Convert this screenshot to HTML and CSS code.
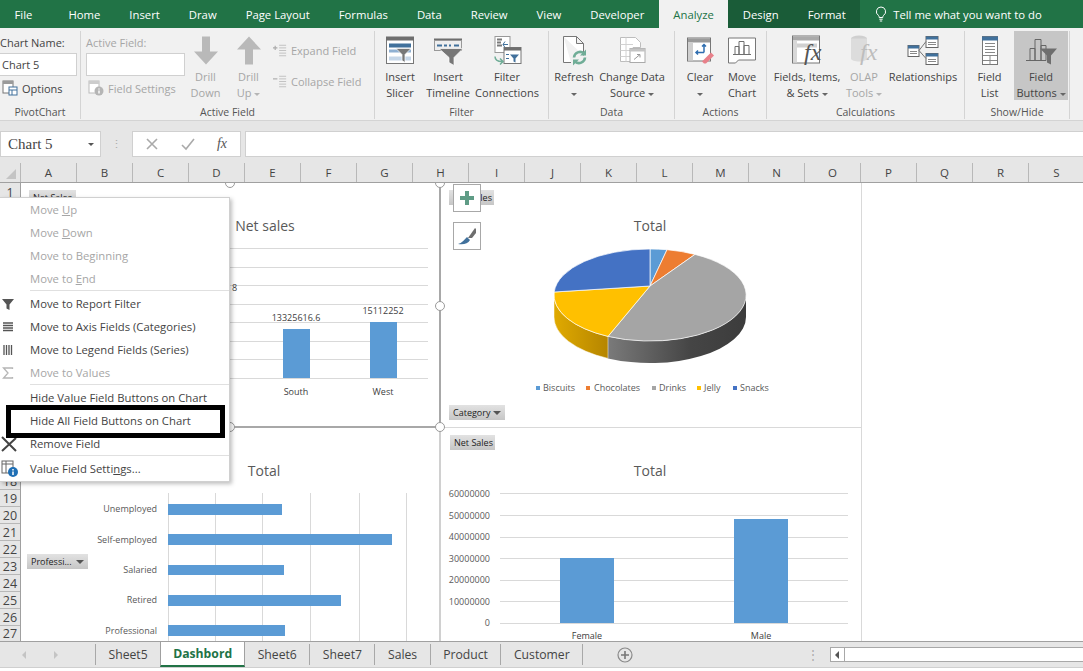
FILE: index.html
```html
<!DOCTYPE html>
<html lang="en">
<head>
    <meta charset="UTF-8">
    <title>Dashbord - Excel</title>
    <link rel="stylesheet" href="styles.css">
</head>
<body>
    <!-- Title tabs -->
    <nav class="tabs">
        <a class="tab tab-file">File</a>
        <a class="tab">Home</a>
        <a class="tab">Insert</a>
        <a class="tab">Draw</a>
        <a class="tab">Page Layout</a>
        <a class="tab">Formulas</a>
        <a class="tab">Data</a>
        <a class="tab">Review</a>
        <a class="tab">View</a>
        <a class="tab">Developer</a>
        <a class="tab tab-active">Analyze</a>
        <a class="tab tab-context">Design</a>
        <a class="tab tab-context">Format</a>
        <a class="tell">
            <svg width="12" height="17" viewBox="0 0 12 17"><path d="M6 1a4.6 4.6 0 0 0-2.6 8.4c.6.5.8 1.2.8 2.1h3.6c0-.9.2-1.6.8-2.1A4.6 4.6 0 0 0 6 1zM4.3 13.2h3.4M4.8 15h2.4" fill="none" stroke="#fff"/></svg>
            <span>Tell me what you want to do</span>
        </a>
    </nav>

    <!-- Ribbon -->
    <div class="ribbon">
        <section class="group g-pivot">
            <div class="group-body col">
                <div class="small-label">Chart Name:</div>
                <div class="name-input">Chart 5</div>
                <div class="small-btn">
                    <svg width="16" height="16" viewBox="0 0 16 16"><rect x="1" y="1" width="10" height="12" fill="#fff" stroke="#777"/><rect x="1" y="1" width="10" height="3" fill="#9a9a9a"/><rect x="7" y="7" width="8" height="8" fill="#fff" stroke="#41719c"/><path d="M7 10h8M10 10v5" stroke="#41719c"/></svg>
                    <span>Options</span>
                </div>
            </div>
            <div class="group-name">PivotChart</div>
        </section>

        <section class="group g-field">
            <div class="group-body">
                <div class="col col-field">
                    <div class="small-label off">Active Field:</div>
                    <div class="name-input wide"></div>
                    <div class="small-btn off">
                        <svg width="16" height="16" viewBox="0 0 16 16"><rect x="1" y="1" width="10" height="12" fill="#fff" stroke="#bbb"/><rect x="1" y="1" width="10" height="3" fill="#ccc"/><circle cx="11" cy="11" r="4.5" fill="#b5b5b5"/><path d="M11 8.5v1M11 10.5v3" stroke="#fff" stroke-width="1.4"/></svg>
                        <span>Field Settings</span>
                    </div>
                </div>
                <div class="big-btn off w-drill">
                    <svg class="big-icon" width="30" height="32" viewBox="0 0 30 32"><path d="M11 2h8v15h8L15 30 3 17h8z" fill="#b9b9b9"/></svg>
                    <span>Drill</span><span>Down</span>
                </div>
                <div class="big-btn off w-drill">
                    <svg class="big-icon" width="30" height="32" viewBox="0 0 30 32"><path d="M11 30h8V15h8L15 2 3 15h8z" fill="#b9b9b9"/></svg>
                    <span>Drill</span><span>Up <i class="caret"></i></span>
                </div>
                <div class="col col-expand">
                    <div class="small-btn off tall">
                        <svg width="14" height="13" viewBox="0 0 16 14"><path d="M0 4h5M2.500 1.500v5" stroke="#aaa" stroke-width="1.300"/><path d="M7 1h8M7 4h8M7 7h8M7 10h8M7 13h8" stroke="#bbb"/></svg>
                        <span>Expand Field</span>
                    </div>
                    <div class="small-btn off tall">
                        <svg width="14" height="13" viewBox="0 0 16 14"><path d="M0 4h5" stroke="#aaa" stroke-width="1.300"/><path d="M7 1h8M7 4h8M7 7h8M7 10h8M7 13h8" stroke="#bbb"/></svg>
                        <span>Collapse Field</span>
                    </div>
                </div>
            </div>
            <div class="group-name">Active Field</div>
        </section>

        <section class="group g-filter">
            <div class="group-body">
                <div class="big-btn w-slicer">
                    <svg class="big-icon" width="30" height="30" viewBox="0 0 30 30"><rect x="1.500" y="2" width="27" height="26" fill="#fff" stroke="#777"/><rect x="1" y="1" width="28" height="4" fill="#6e6e6e"/><rect x="4" y="8" width="22" height="4" fill="#41719c"/><rect x="4" y="14" width="22" height="3" fill="#8fb0d2"/><rect x="4" y="21" width="22" height="4" fill="#c5d6e8"/><path d="M11 13h15l-6 6v8l-3-2v-6z" fill="#777" stroke="#fff" stroke-width=".7"/></svg>
                    <span>Insert</span><span>Slicer</span>
                </div>
                <div class="big-btn w-timeline">
                    <svg class="big-icon" width="30" height="30" viewBox="0 0 30 30"><rect x="1" y="3" width="28" height="3" fill="#6e6e6e"/><rect x="1.500" y="5" width="27" height="10" fill="#eee" stroke="#999"/><path d="M4 10h5M11 10h3M16 10h2M21 10h5" stroke="#41719c" stroke-width="2"/><path d="M6 13h24l-9 9v8l-5-3v-5z" fill="#777" stroke="#fff" stroke-width=".7"/></svg>
                    <span>Insert</span><span>Timeline</span>
                </div>
                <div class="big-btn w-conn">
                    <svg class="big-icon" width="30" height="30" viewBox="0 0 30 30"><rect x="3" y="1" width="15" height="16" fill="#fff" stroke="#999"/><path d="M5 4h5M5 7h4M5 10h5" stroke="#7a7a7a" stroke-width="2"/><path d="M11 9h5M13 6l-2 3 2 3" fill="none" stroke="#41719c"/><rect x="12" y="12" width="17" height="16" fill="#fff" stroke="#777"/><rect x="12" y="12" width="17" height="3" fill="#6e6e6e"/><path d="M18 19h9l-3.500 4v4l-2-1v-3z" fill="#41719c"/><path d="M14 19h3M14 23h3" stroke="#41719c"/><path d="M3 21c0 4 3 5 7 5M8 23l3 3-3 3" fill="none" stroke="#70ad97" stroke-width="1.500"/></svg>
                    <span>Filter</span><span>Connections</span>
                </div>
            </div>
            <div class="group-name">Filter</div>
        </section>

        <section class="group g-data">
            <div class="group-body">
                <div class="big-btn w-refresh">
                    <svg class="big-icon" width="28" height="30" viewBox="0 0 28 30"><path d="M3.500 1h13l7 7v12M11 27H3.500V1M16.500 1v7h7" fill="#fff" stroke="#777"/><path d="M14 22a6 6 0 0 1 10-4M25 22a6 6 0 0 1-10 4" fill="none" stroke="#70ad97" stroke-width="2.600"/><path d="M26 14v6h-6zM13 30v-6h6z" fill="#70ad97"/></svg>
                    <span>Refresh</span><span><i class="caret"></i></span>
                </div>
                <div class="big-btn w-change">
                    <svg class="big-icon" width="30" height="30" viewBox="0 0 30 30"><path d="M3.500 2h15l5 5v5H16v14H3.500z" fill="#fff" stroke="#bdbdbd"/><path d="M3.500 9H16M3.500 15H16M3.500 21H16M9 2v24" stroke="#d2d2d2"/><rect x="13" y="13" width="15" height="14" fill="#fff" stroke="#aaa"/><rect x="13" y="13" width="15" height="3" fill="#c4c4c4"/><path d="M17 24l6-5M20 19h3v3" fill="none" stroke="#9a9a9a"/></svg>
                    <span>Change Data</span><span>Source <i class="caret"></i></span>
                </div>
            </div>
            <div class="group-name">Data</div>
        </section>

        <section class="group g-actions">
            <div class="group-body">
                <div class="big-btn w-clear">
                    <svg class="big-icon" width="30" height="30" viewBox="0 0 30 30"><rect x="2.500" y="2.500" width="23" height="23" fill="#fff" stroke="#777"/><rect x="3" y="3" width="22" height="4" fill="#9a9a9a"/><rect x="3" y="7" width="5" height="18" fill="#cfcfcf"/><path d="M12 17h7M19 17v-7M17 11l2-2 2 2M13 15l-2 2 2 2" fill="none" stroke="#2f6eb0" stroke-width="1.500"/><path d="M17 26l9-9 3 3-8 8h-2z" fill="#e8808a"/></svg>
                    <span>Clear</span><span><i class="caret"></i></span>
                </div>
                <div class="big-btn w-move">
                    <svg class="big-icon" width="30" height="28" viewBox="0 0 30 28"><path d="M1.500 1.500h27v22h-17l-3 3h-7z" fill="#fff" stroke="#777"/><path d="M8 18V10h4v8M12 18V5h5v13M17 18V9h5v9M6 18h18" fill="none" stroke="#6e6e6e"/></svg>
                    <span>Move</span><span>Chart</span>
                </div>
            </div>
            <div class="group-name">Actions</div>
        </section>

        <section class="group g-calc">
            <div class="group-body">
                <div class="big-btn w-fields">
                    <svg class="big-icon" width="32" height="32" viewBox="0 0 32 32"><rect x="1.500" y="1.500" width="27" height="27" fill="#fff" stroke="#777"/><rect x="2" y="2" width="26" height="4" fill="#aaa"/><rect x="6" y="9" width="20" height="4" fill="#d0d0d0"/><rect x="2" y="6" width="4" height="22" fill="#d8d8d8"/><text class="fx-big" x="13" y="25">fx</text></svg>
                    <span>Fields, Items,</span><span>&amp; Sets <i class="caret"></i></span>
                </div>
                <div class="big-btn off w-olap">
                    <svg class="big-icon" width="30" height="32" viewBox="0 0 30 32"><ellipse cx="10" cy="4" rx="8" ry="3" fill="#cfcfcf"/><path d="M2 4v20c0 2 4 3 8 3s8-1 8-3V4z" fill="#dcdcdc"/><text class="fx-big fx-off" x="11" y="25">fx</text></svg>
                    <span>OLAP</span><span>Tools <i class="caret"></i></span>
                </div>
                <div class="big-btn w-rel">
                    <svg class="big-icon" width="32" height="30" viewBox="0 0 32 30"><rect x="1" y="10" width="11" height="11" fill="#fff" stroke="#666"/><rect x="1" y="10" width="11" height="3" fill="#41719c"/><rect x="19" y="1" width="12" height="11" fill="#fff" stroke="#666"/><rect x="19" y="1" width="12" height="3" fill="#41719c"/><rect x="19" y="18" width="12" height="11" fill="#fff" stroke="#666"/><rect x="19" y="18" width="12" height="3" fill="#41719c"/><path d="M12 15l7-9M12 15l7 8" fill="none" stroke="#777"/><path d="M3 16h7M3 18h7M21 7h8M21 9h8M21 24h8M21 26h8" stroke="#888"/></svg>
                    <span>Relationships</span>
                </div>
            </div>
            <div class="group-name">Calculations</div>
        </section>

        <section class="group g-show">
            <div class="group-body">
                <div class="big-btn w-list">
                    <svg class="big-icon" width="18" height="30" viewBox="0 0 18 30"><rect x="1.500" y="1" width="15" height="28" fill="#fff" stroke="#777"/><rect x="1" y="1" width="16" height="4" fill="#41719c"/><path d="M4 8h10M4 11h10M4 14h10M4 17h10M2 20h14M2 25h14M9 20v9" stroke="#888"/></svg>
                    <span>Field</span><span>List</span>
                </div>
                <div class="big-btn w-buttons btn-on">
                    <svg class="big-icon" width="32" height="30" viewBox="0 0 32 30"><path d="M1 25h20M5 25V13h5v12M10 25V4h6v21M16 25V10h5v15" fill="none" stroke="#666"/><path d="M15 13h17l-6 7v9l-4-2v-7z" fill="#6e6e6e"/></svg>
                    <span>Field</span><span>Buttons <i class="caret"></i></span>
                </div>
            </div>
            <div class="group-name">Show/Hide</div>
        </section>
    </div>

    <!-- Formula bar -->
    <div class="formula-row">
        <div class="name-box"><span>Chart 5</span><i class="caret dark"></i></div>
        <div class="dots">⋮</div>
        <div class="fx-box">
            <svg width="14" height="14" viewBox="0 0 14 14"><path d="M2 2l10 10M12 2L2 12" stroke="#aaa" stroke-width="1.600"/></svg>
            <svg width="14" height="14" viewBox="0 0 14 14"><path d="M1 8l4 4 8-10" fill="none" stroke="#aaa" stroke-width="1.600"/></svg>
            <span class="fx-small">fx</span>
        </div>
        <div class="formula-input"></div>
    </div>

    <!-- Column headers -->
    <div class="col-heads">
        <div class="corner"><i></i></div>
        <div class="col-head">A</div><div class="col-head">B</div><div class="col-head">C</div>
        <div class="col-head">D</div><div class="col-head">E</div><div class="col-head">F</div>
        <div class="col-head">G</div><div class="col-head">H</div><div class="col-head">I</div>
        <div class="col-head">J</div><div class="col-head">K</div><div class="col-head">L</div>
        <div class="col-head">M</div><div class="col-head">N</div><div class="col-head">O</div>
        <div class="col-head">P</div><div class="col-head">Q</div><div class="col-head">R</div>
        <div class="col-head">S</div>
    </div>

    <!-- Sheet -->
    <main class="sheet">
        <div class="row-heads">
            <div>1</div><div>2</div><div>3</div><div>4</div><div>5</div><div>6</div><div>7</div><div>8</div><div>9</div>
            <div>10</div><div>11</div><div>12</div><div>13</div><div>14</div><div>15</div><div>16</div><div>17</div><div>18</div>
            <div>19</div><div>20</div><div>21</div><div>22</div><div>23</div><div>24</div><div>25</div><div>26</div><div>27</div>
        </div>

        <div class="canvas">
            <!-- Chart 5, selected -->
            <div class="chart chart-sales">
                <svg class="plot" viewBox="20 183 419 243">
                    <text class="c-title" x="265" y="231">Net sales</text>
                    <path class="grid" d="M230 248.500H428M230 267.500H428M230 285.500H428M230 304.500H428M230 322.500H428M230 341.500H428M230 359.500H428M230 378.500H428"/>
                    <rect class="bar" x="283" y="329" width="27" height="49"/>
                    <rect class="bar" x="370" y="322" width="27" height="56"/>
                    <text class="c-label" x="232" y="291">8</text>
                    <text class="c-val" x="296" y="321">13325616.6</text>
                    <text class="c-val" x="383" y="314">15112252</text>
                    <text class="c-val" x="296" y="395">South</text>
                    <text class="c-val" x="383" y="395">West</text>
                </svg>
                <div class="field-btn fb-net1">Net Sales</div>
            </div>

            <!-- Pie chart -->
            <div class="chart chart-pie">
                <svg class="plot" viewBox="441 183 420 245">
                    <defs>
                        <linearGradient id="wallGray"><stop offset="0" stop-color="#7a7a7a"/><stop offset=".6" stop-color="#454545"/><stop offset="1" stop-color="#3c3c3c"/></linearGradient>
                        <linearGradient id="wallGold"><stop offset="0" stop-color="#e0aa00"/><stop offset="1" stop-color="#b58500"/></linearGradient>
                    </defs>
                    <text class="c-title" x="650" y="231">Total</text>
                    <path d="M746 295A96 46 0 0 1 608 336.400V358.400A96 46 0 0 0 746 317z" fill="url(#wallGray)"/>
                    <path d="M608 336.400A96 46 0 0 1 554 295V317A96 46 0 0 0 608 358.400z" fill="url(#wallGold)" stroke="#fff" stroke-width=".5"/>
                    <g stroke="#fff" stroke-width=".7">
                        <path d="M650 286V249A96 46 0 0 1 667 249.700z" fill="#5b9bd5"/>
                        <path d="M650 286L667 249.700A96 46 0 0 1 695 254.400z" fill="#ed7d31"/>
                        <path d="M650 286L695 254.400A96 46 0 0 1 608 336.400z" fill="#a5a5a5"/>
                        <path d="M650 286L608 336.400A96 46 0 0 1 554.200 292z" fill="#ffc000"/>
                        <path d="M650 286L554.200 292A96 46 0 0 1 650 249z" fill="#4472c4"/>
                    </g>
                    <rect x="536" y="386" width="4" height="4" fill="#5b9bd5"/><text class="c-leg" x="543" y="391">Biscuits</text>
                    <rect x="586" y="386" width="4" height="4" fill="#ed7d31"/><text class="c-leg" x="594" y="391">Chocolates</text>
                    <rect x="652" y="386" width="4" height="4" fill="#a5a5a5"/><text class="c-leg" x="659" y="391">Drinks</text>
                    <rect x="697" y="386" width="4" height="4" fill="#ffc000"/><text class="c-leg" x="704" y="391">Jelly</text>
                    <rect x="733" y="386" width="4" height="4" fill="#4472c4"/><text class="c-leg" x="740" y="391">Snacks</text>
                </svg>
                <div class="field-btn fb-net2">Net Sales</div>
                <div class="field-btn fb-cat">Category<i class="caret dark"></i></div>
            </div>

            <!-- Profession chart -->
            <div class="chart chart-prof">
                <svg class="plot" viewBox="20 428 419 214">
                    <text class="c-title" x="264" y="476">Total</text>
                    <path class="grid" d="M168.500 493V642M215.500 493V642M262.500 493V642M310.500 493V642M359.500 493V642M406.500 493V642"/>
                    <rect class="bar" x="168" y="504" width="114" height="11"/>
                    <rect class="bar" x="168" y="534" width="224" height="11"/>
                    <rect class="bar" x="168" y="565" width="116" height="10"/>
                    <rect class="bar" x="168" y="595" width="173" height="11"/>
                    <rect class="bar" x="168" y="625" width="117" height="11"/>
                    <text class="c-cat" x="157" y="512">Unemployed</text>
                    <text class="c-cat" x="157" y="543">Self-employed</text>
                    <text class="c-cat" x="157" y="573">Salaried</text>
                    <text class="c-cat" x="157" y="603">Retired</text>
                    <text class="c-cat" x="157" y="634">Professional</text>
                </svg>
                <div class="field-btn fb-prof">Professi...<i class="caret dark"></i></div>
            </div>

            <!-- Gender chart -->
            <div class="chart chart-gender">
                <svg class="plot" viewBox="441 428 420 214">
                    <text class="c-title" x="650" y="476">Total</text>
                    <path class="grid" d="M500 493.500H848M500 515.500H848M500 537.500H848M500 558.500H848M500 580.500H848M500 601.500H848M500 623.500H848"/>
                    <rect class="bar" x="560" y="558" width="54" height="65"/>
                    <rect class="bar" x="734" y="519" width="54" height="104"/>
                    <text class="c-cat" x="490" y="497">60000000</text>
                    <text class="c-cat" x="490" y="519">50000000</text>
                    <text class="c-cat" x="490" y="540">40000000</text>
                    <text class="c-cat" x="490" y="562">30000000</text>
                    <text class="c-cat" x="490" y="583">20000000</text>
                    <text class="c-cat" x="490" y="605">10000000</text>
                    <text class="c-cat" x="490" y="626">0</text>
                    <text class="c-val" x="587" y="638.500">Female</text>
                    <text class="c-val" x="761" y="638.500">Male</text>
                </svg>
                <div class="field-btn fb-net3">Net Sales</div>
            </div>

            <!-- Selection handles -->
            <i class="handle h1"></i><i class="handle h2"></i><i class="handle h3"></i><i class="handle h4"></i><i class="handle h5"></i>

            <!-- Chart tools -->
            <div class="chart-tool tool-add">
                <svg width="16" height="16" viewBox="0 0 16 16"><path d="M6 1h4v5h5v4h-5v5H6v-5H1V6h5z" fill="#5f9c86"/></svg>
            </div>
            <div class="chart-tool tool-style">
                <svg width="20" height="20" viewBox="0 0 20 20"><path d="M11 12l7-10 1 1v4l-4 5z" fill="#6e6e6e"/><path d="M10 11l3 3c-2 4-7 5-12 4 4-1 6-4 9-7z" fill="#41719c"/></svg>
            </div>
        </div>

        <!-- Context menu -->
        <div class="menu">
            <div class="menu-item off"><span>Move <u>U</u>p</span></div>
            <div class="menu-item off"><span>Move <u>D</u>own</span></div>
            <div class="menu-item off"><span>Move to Be<u>g</u>inning</span></div>
            <div class="menu-item off"><span>Move to <u>E</u>nd</span></div>
            <div class="menu-sep"></div>
            <div class="menu-item">
                <svg class="menu-icon" width="14" height="14" viewBox="0 0 14 14"><path d="M1 2h12L8.500 7.500V13l-3-1.500v-4z" fill="#555"/></svg>
                <span>Move to Report Filter</span>
            </div>
            <div class="menu-item">
                <svg class="menu-icon" width="14" height="14" viewBox="0 0 14 14"><path d="M2 3h10M2 5.500h10M2 8h10M2 10.500h10" stroke="#555" stroke-width="1.300"/></svg>
                <span>Move to Axis Fields (Categories)</span>
            </div>
            <div class="menu-item">
                <svg class="menu-icon" width="14" height="14" viewBox="0 0 14 14"><path d="M3 2v10M5.500 2v10M8 2v10M10.500 2v10" stroke="#555" stroke-width="1.300"/></svg>
                <span>Move to Legend Fields (Series)</span>
            </div>
            <div class="menu-item off">
                <svg class="menu-icon" width="14" height="14" viewBox="0 0 14 14"><path d="M11.500 3V2h-9l4.500 5-4.500 5h9v-1" fill="none" stroke="#b5b5b5" stroke-width="1.300"/></svg>
                <span>Move to Values</span>
            </div>
            <div class="menu-sep"></div>
            <div class="menu-item"><span>Hide Value Field Buttons on Chart</span></div>
            <div class="menu-item"><span>Hide All Field Buttons on Chart</span></div>
            <div class="menu-item">
                <svg class="menu-icon" width="16" height="16" viewBox="0 0 16 16"><path d="M1 1l14 14M15 2L1 15" stroke="#444" stroke-width="2"/></svg>
                <span>Remove Field</span>
            </div>
            <div class="menu-sep"></div>
            <div class="menu-item">
                <svg class="menu-icon" width="18" height="18" viewBox="0 0 18 18"><rect x="1" y="1" width="11" height="12" fill="#fff" stroke="#666"/><path d="M1 4h11M5 1v12" stroke="#666"/><circle cx="12" cy="12" r="5" fill="#1f6fb5"/><path d="M12 9v1.500M12 11.500V15" stroke="#fff" stroke-width="1.500"/></svg>
                <span>Value Field Setti<u>n</u>gs...</span>
            </div>
            <div class="menu-mark"></div>
        </div>
    </main>

    <!-- Sheet tabs -->
    <footer class="sheet-bar">
        <div class="sheet-nav">
            <svg width="40" height="10" viewBox="0 0 40 10"><path d="M4 1L0 5l4 4zM32 1l4 4-4 4z" fill="#c4c4c4"/></svg>
        </div>
        <a class="sheet-tab">Sheet5</a>
        <a class="sheet-tab sheet-active">Dashbord</a>
        <a class="sheet-tab">Sheet6</a>
        <a class="sheet-tab">Sheet7</a>
        <a class="sheet-tab">Sales</a>
        <a class="sheet-tab">Product</a>
        <a class="sheet-tab">Customer</a>
        <div class="add-sheet">
            <svg width="16" height="16" viewBox="0 0 16 16"><circle cx="8" cy="8" r="7" fill="none" stroke="#8a8a8a" stroke-width="1.200"/><path d="M8 4v8M4 8h8" stroke="#777" stroke-width="1.600"/></svg>
        </div>
        <div class="bar-dots">⋮</div>
        <div class="h-scroll">
            <div class="h-arrow"><svg width="5" height="8" viewBox="0 0 5 8"><path d="M4 0L0 4l4 4z" fill="#555"/></svg></div>
        </div>
    </footer>
</body>
</html>
```

FILE: styles.css
```css
* {
    margin: 0;
    padding: 0;
    box-sizing: border-box;
}

body {
    width: 1083px;
    height: 671px;
    overflow: hidden;
    display: flex;
    flex-direction: column;
    background-color: #fff;
    color: #444;
    font-family: "Open Sans", "Noto Sans", sans-serif;
    font-size: 11px;
}

/* Title tabs */
.tabs {
    display: flex;
    flex: none;
    height: 28px;
    background-color: #217346;
    color: #fff;
    font-size: 11.3px;
}

.tab {
    display: flex;
    align-items: center;
    padding: 0 14.5px;
    white-space: nowrap;
}

.tab-file {
    padding-right: 21.5px;
}

.tab-active {
    background-color: #f1f1f1;
    color: #217346;
}

.tab-context {
    background-color: #1a5c38;
}

.tell {
    display: flex;
    align-items: center;
    gap: 6px;
    padding-left: 15px;
    white-space: nowrap;
}

/* Ribbon */
.ribbon {
    display: flex;
    flex: none;
    height: 93px;
    padding: 3px 0 1px;
    background-color: #f1f1f1;
    border-bottom: 1px solid #d4d4d4;
}

.group {
    display: flex;
    flex-direction: column;
    flex: none;
    border-right: 1px solid #d4d4d4;
}

.g-pivot { width: 81px; }
.g-field { width: 294px; }
.g-filter { width: 174px; }
.g-data { width: 126px; }
.g-actions { width: 92px; }
.g-calc { width: 198px; }
.g-show { width: 105px; }

.group-body {
    display: flex;
    flex: 1;
}

.group-name {
    flex: none;
    height: 14px;
    line-height: 14px;
    text-align: center;
    color: #555;
    font-size: 10.5px;
}

.col {
    display: flex;
    flex-direction: column;
}

.small-label {
    height: 20px;
    margin-top: 2px;
    line-height: 20px;
    white-space: nowrap;
}

.name-input {
    width: 77px;
    height: 23px;
    padding-left: 2px;
    line-height: 21px;
    background-color: #fff;
    border: 1px solid #d0d0d0;
    border-left: none;
}

.name-input.wide {
    width: 99px;
    border-left: 1px solid #d0d0d0;
}

.small-btn {
    display: flex;
    align-items: center;
    gap: 4px;
    height: 24px;
    padding-left: 2px;
    white-space: nowrap;
}

.small-btn.tall {
    height: 31px;
}

.col-field {
    width: 103px;
    padding-left: 5px;
    flex: none;
}

.col-expand {
    padding: 4px 0 0 1px;
}

.off {
    color: #a6a6a6;
}

.big-btn {
    display: flex;
    flex-direction: column;
    align-items: center;
    flex: none;
    height: 69px;
    line-height: 16px;
    white-space: nowrap;
}

.big-icon {
    flex: none;
    height: 36px;
    margin-bottom: 2px;
    padding-top: 3px;
}

.w-drill { width: 43px; }
.w-slicer { width: 50px; }
.w-timeline { width: 46px; }
.w-conn { width: 66px; margin-left: 3px; }
.w-refresh { width: 50px; }
.w-change { width: 64px; margin-left: 1px; }
.w-clear { width: 50px; }
.w-move { width: 34px; }
.w-fields { width: 80px; }
.w-olap { width: 36px; margin-left: -1px; }
.w-rel { width: 80px; margin-left: 1px; }
.w-list { width: 49px; }
.w-buttons { width: 54px; }

.btn-on {
    background-color: #c6c6c6;
}

.caret {
    display: inline-block;
    width: 0;
    height: 0;
    vertical-align: middle;
    border-left: 3px solid transparent;
    border-right: 3px solid transparent;
    border-top: 3px solid #666;
}

.off .caret {
    border-top-color: #b5b5b5;
}

.caret.dark {
    border-top-color: #555;
}

.fx-big {
    font-family: "Liberation Serif", serif;
    font-style: italic;
    font-size: 24px;
    fill: #555;
}

.fx-off {
    fill: #bdbdbd;
}

/* Formula bar */
.formula-row {
    display: flex;
    flex: none;
    height: 42px;
    padding-top: 10px;
    background-color: #e6e6e6;
}

.name-box {
    display: flex;
    justify-content: space-between;
    align-items: center;
    flex: none;
    width: 101px;
    height: 26px;
    padding: 0 6px 0 7px;
    background-color: #fff;
    border: 1px solid #d0d0d0;
    font-family: "Liberation Serif", serif;
    font-size: 15px;
}

.dots {
    width: 31px;
    height: 26px;
    line-height: 26px;
    text-align: center;
    color: #aaa;
}

.fx-box {
    display: flex;
    align-items: center;
    justify-content: space-between;
    flex: none;
    width: 109px;
    height: 26px;
    padding: 0 13px 0 12px;
    background-color: #fff;
    border: 1px solid #d0d0d0;
}

.fx-small {
    font-family: "Liberation Serif", serif;
    font-style: italic;
    font-size: 14px;
    color: #555;
}

.formula-input {
    flex: 1;
    height: 26px;
    margin-left: 4px;
    background-color: #fff;
    border: 1px solid #d0d0d0;
    border-right: none;
}

/* Column headers */
.col-heads {
    display: flex;
    flex: none;
    height: 20px;
    background-color: #e6e6e6;
    border-bottom: 1px solid #a0a0a0;
    font-size: 11.5px;
}

.corner {
    display: flex;
    align-items: flex-end;
    justify-content: flex-end;
    flex: none;
    width: 21px;
    padding: 0 4px 3px 0;
    border-right: 1px solid #b8b8b8;
}

.corner i {
    width: 0;
    height: 0;
    border-left: 10px solid transparent;
    border-bottom: 10px solid #c4c4c4;
}

.col-head {
    flex: none;
    width: 56px;
    line-height: 20px;
    text-align: center;
    border-right: 1px solid #b8b8b8;
}

/* Sheet */
.sheet {
    display: flex;
    flex: none;
    position: relative;
    height: 459px;
    border-bottom: 1px solid #a0a0a0;
}

.row-heads {
    flex: none;
    width: 21px;
    padding-top: 1px;
    background-color: #e6e6e6;
    border-right: 1px solid #a0a0a0;
}

.row-heads div {
    height: 17px;
    line-height: 17px;
    text-align: center;
    font-size: 12.5px;
    border-bottom: 1px solid #b8b8b8;
}

.row-heads div:last-child {
    height: 15px;
    line-height: 15px;
    border-bottom: none;
}

.canvas {
    flex: 1;
    position: relative;
    overflow: hidden;
}

.chart {
    position: absolute;
    background-color: #fff;
}

.chart-sales {
    left: -1px;
    top: 0;
    width: 421px;
    height: 245px;
    border-right: 2px solid #a8a8a8;
    border-bottom: 2px solid #a8a8a8;
}

.chart-pie {
    left: 420px;
    top: 0;
    width: 421px;
    height: 245px;
    border-right: 1px solid #d9d9d9;
}

.chart-prof {
    left: -1px;
    top: 245px;
    width: 421px;
    height: 214px;
    border-right: 2px solid #d0d0d0;
}

.chart-gender {
    left: 420px;
    top: 244px;
    width: 421px;
    height: 215px;
    border-top: 1px solid #d9d9d9;
    border-right: 1px solid #d9d9d9;
}

.plot {
    display: block;
    width: 100%;
    height: 100%;
}

.c-title {
    font-size: 14px;
    text-anchor: middle;
    fill: #595959;
}

.c-val,
.c-leg,
.c-cat,
.c-label {
    font-size: 9px;
    fill: #404040;
}

.c-val {
    text-anchor: middle;
}

.c-leg,
.c-cat {
    fill: #595959;
}

.c-cat {
    text-anchor: end;
}

.grid {
    fill: none;
    stroke: #d9d9d9;
    stroke-width: 1;
}

.bar {
    fill: #5b9bd5;
}

.field-btn {
    display: flex;
    align-items: center;
    justify-content: space-between;
    position: absolute;
    height: 15px;
    padding: 0 4px;
    background: linear-gradient(#e2e2e2, #c6c6c6);
    color: #222;
    font-size: 9px;
    white-space: nowrap;
}

.field-btn .caret {
    border-left-width: 4px;
    border-right-width: 4px;
    border-top-width: 4px;
}

.fb-net1 { left: 9px; top: 7px; width: 47px; }
.fb-net2 { left: 8px; top: 7px; width: 45px; }
.fb-cat { left: 8px; top: 222px; width: 56px; }
.fb-prof { left: 7px; top: 126px; width: 61px; }
.fb-net3 { left: 9px; top: 7px; width: 45px; }

.handle {
    position: absolute;
    width: 10px;
    height: 10px;
    background-color: #fff;
    border: 1.5px solid #9a9a9a;
    border-radius: 50%;
}

.h1 { left: 204px; top: -5px; }
.h2 { left: 414px; top: -5px; }
.h3 { left: 414px; top: 118px; }
.h4 { left: 414px; top: 239px; }
.h5 { left: 204px; top: 239px; }

.chart-tool {
    display: flex;
    align-items: center;
    justify-content: center;
    position: absolute;
    left: 432px;
    width: 28px;
    height: 28px;
    background-color: #fff;
    border: 1px solid #a8a8a8;
}

.tool-add { top: 1px; }
.tool-style { top: 39px; }

/* Context menu */
.menu {
    position: absolute;
    left: 0;
    top: 14px;
    width: 230px;
    height: 285px;
    background-color: #fff;
    border: 1px solid #d0d0d0;
    border-left: none;
    box-shadow: 2px 2px 4px rgba(0, 0, 0, 0.25);
    font-size: 11.3px;
}

.menu-item {
    display: flex;
    align-items: center;
    height: 23px;
    padding-left: 30px;
    position: relative;
    white-space: nowrap;
}

.menu-icon {
    position: absolute;
    left: 1px;
    top: 50%;
    transform: translateY(-50%);
}

.menu-sep {
    height: 1px;
    margin: 0 0 1px 30px;
    background-color: #e0e0e0;
}

.menu-mark {
    position: absolute;
    left: 6px;
    top: 207px;
    width: 219px;
    height: 33px;
    border: 5px solid #000;
}

/* Sheet tabs */
.sheet-bar {
    display: flex;
    align-items: stretch;
    flex: none;
    height: 26px;
    background-color: #e6e6e6;
    border-bottom: 1px solid #cfcfcf;
    font-size: 12.2px;
}

.sheet-nav {
    display: flex;
    align-items: center;
    flex: none;
    width: 96px;
    padding-left: 22px;
    border-right: 1px solid #a8a8a8;
    margin: 2px 0;
}

.sheet-tab {
    display: flex;
    align-items: center;
    padding: 0 12.5px;
    margin: 2px 0;
    border-right: 1px solid #a8a8a8;
    white-space: nowrap;
}

.sheet-active {
    margin: -1px 0 0 -1px;
    padding: 0 12px;
    background-color: #fff;
    color: #217346;
    font-weight: bold;
    border: 1px solid #a0a0a0;
    border-top: none;
    border-bottom: 2px solid #217346;
}

.add-sheet {
    display: flex;
    align-items: center;
    margin-left: 34px;
}

.bar-dots {
    width: 20px;
    margin-left: 170px;
    line-height: 26px;
    text-align: center;
    color: #aaa;
}

.h-scroll {
    flex: 1;
    margin: 5px 0 5px 7px;
    background-color: #fff;
    border: 1px solid #a8a8a8;
    border-right: none;
}

.h-arrow {
    display: flex;
    align-items: center;
    justify-content: center;
    width: 14px;
    height: 100%;
    border-right: 1px solid #a8a8a8;
}
```
